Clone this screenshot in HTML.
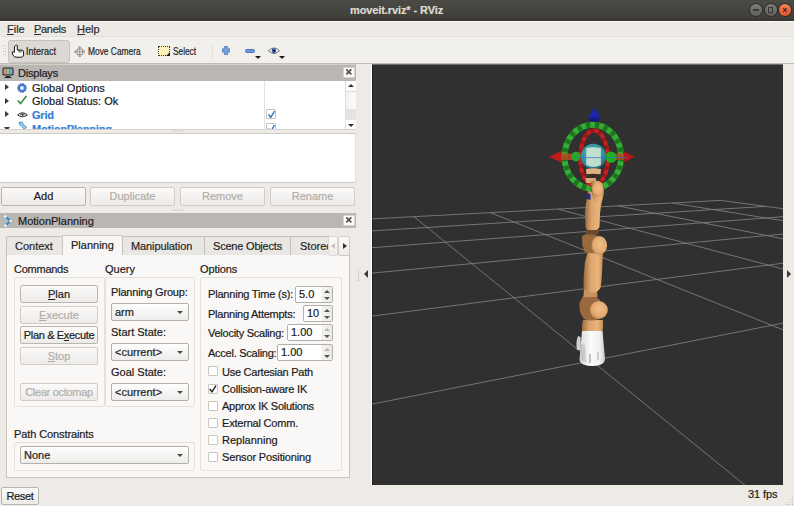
<!DOCTYPE html>
<html><head><meta charset="utf-8">
<style>
*{box-sizing:border-box;margin:0;padding:0}
html,body{width:794px;height:506px;overflow:hidden;background:#eeebe7;font-family:"Liberation Sans",sans-serif;font-size:11px;color:#2a2a2a;-webkit-text-stroke:0.2px currentColor}
.a{position:absolute}
.t{position:absolute;white-space:nowrap;line-height:13px}
#title{left:0;top:0;width:794px;height:21px;background:linear-gradient(#4b4a45,#403f3b 85%,#35342f)}
#title .t{color:#dfdbd2;font-weight:bold;font-size:12px;left:349px;top:3px}
.wb{position:absolute;top:4.1px;width:12px;height:12px;border-radius:50%;background:linear-gradient(#7f7d77,#5f5d58);box-shadow:0 0 0 1px #2e2d2a}
#menu{left:0;top:21px;width:794px;height:15px;background:#edeae5;border-top:1px solid #fcfaf7}
#tool{left:0;top:36px;width:794px;height:28px;background:#f2f0ec;border-top:1px solid #e4e1dc;border-bottom:1px solid #bfbbb5}
.btn{position:absolute;border:1px solid #b9b6b0;border-radius:2px;background:linear-gradient(#fbfaf9,#ecebe9);text-align:center;line-height:16px;color:#202020}
.btn.dis{color:#b0ada8;border-color:#d0cdc8}
.dockh{position:absolute;left:0;width:356px;background:#bab6b2}
.xbtn{position:absolute;width:12px;height:11px;background:#fbfaf8;border:1px solid #d6d3ce;border-radius:1px}
.tri{position:absolute;width:0;height:0;border-top:4px solid transparent;border-bottom:4px solid transparent;border-left:4px solid #3c3c3c}
.trid{position:absolute;width:0;height:0;border-left:4px solid transparent;border-right:4px solid transparent;border-top:4px solid #3c3c3c}
.cb{position:absolute;width:13px;height:13px;border:1px solid #c9c6c1;background:#fff;border-radius:1px}
.combo{position:absolute;border:1px solid #b3b0aa;border-radius:2px;background:linear-gradient(#fdfdfc,#eeedeb);line-height:16px;padding-left:3px;color:#202020}
.combo:after{content:"";position:absolute;right:5px;top:7px;border-left:3px solid transparent;border-right:3px solid transparent;border-top:3.5px solid #4a4a4a}
.spin{position:absolute;border:1px solid #b3b0aa;border-radius:2px;background:#fff;line-height:16px;padding-left:4px;color:#202020}
.grp{position:absolute;border:1px solid #e4e1dc;border-radius:2px}
.tab{position:absolute;top:236px;height:19px;border:1px solid #c4c1bb;border-bottom:none;background:#e9e7e3;line-height:18px;text-align:center;color:#262626;border-radius:2px 2px 0 0}
</style></head><body>
<div id="title" class="a"><div class="t" style="left:350px;top:4px;font-size:11px;letter-spacing:-0.1px">moveit.rviz* - RViz</div>
 <div class="wb" style="left:750px"><div class="a" style="left:2.8px;top:5.4px;width:6.4px;height:1.3px;background:#3a3935"></div></div>
 <div class="wb" style="left:764.5px"><div class="a" style="left:3.2px;top:3.2px;width:5.6px;height:5.4px;border:1.2px solid #3a3935"></div></div>
 <div class="wb" style="left:778.7px;background:linear-gradient(#f8825a,#e0512a)"><svg class="a" style="left:0;top:0" width="12" height="12"><path d="M4.2,4.2 L7.8,7.8 M7.8,4.2 L4.2,7.8" stroke="#3a2418" stroke-width="1.1"/></svg></div>
</div>
<div id="menu" class="a">
 <div class="t" style="left:7px;top:1px"><u>F</u>ile</div>
 <div class="t" style="left:34px;top:1px;letter-spacing:-0.3px"><u>P</u>anels</div>
 <div class="t" style="left:77px;top:1px"><u>H</u>elp</div>
</div>
<div id="tool" class="a">
 <svg class="a" style="left:2px;top:7px" width="6" height="14"><g fill="#cdc9c3"><rect x="1" y="1" width="1" height="1"/><rect x="3" y="1" width="1" height="1"/><rect x="1" y="4" width="1" height="1"/><rect x="3" y="4" width="1" height="1"/><rect x="1" y="7" width="1" height="1"/><rect x="3" y="7" width="1" height="1"/><rect x="1" y="10" width="1" height="1"/><rect x="3" y="10" width="1" height="1"/></g></svg>
 <div class="a" style="left:8px;top:3px;width:62px;height:23px;background:#dcd9d5;border:1px solid #c6c2bc;border-radius:3px"></div>
 <svg class="a" style="left:11px;top:7px" width="14" height="14" viewBox="0 0 14 14"><path d="M4.5,1.5 Q5.5,0.8 6.3,1.5 L6.3,6 L11.2,6.2 Q12.6,6.5 12.6,8 L12.6,11 Q12.3,13 10.5,13.2 L5,13.2 Q3,13 2.2,11.3 L1.2,8.8 Q1,7.8 2,7.6 L3.3,8.5 L3.6,2.2 Z" fill="#fff" stroke="#111" stroke-width="1"/><path d="M8,6.2 L8,8.6 M10,6.3 L10,8.6" stroke="#111" stroke-width="0.8"/></svg>
 <div class="t" style="left:26px;top:8px;font-size:10px;color:#1e1e1e;transform-origin:0 0;transform:scaleX(0.9)">Interact</div>
 <svg class="a" style="left:73.5px;top:8.5px" width="11.5" height="11.5" viewBox="0 0 13 13"><g fill="none" stroke="#777" stroke-width="0.8"><path d="M6.5,0.5 L6.5,12.5 M0.5,6.5 L12.5,6.5"/><path d="M4.5,2.5 L6.5,0.5 L8.5,2.5 M4.5,10.5 L6.5,12.5 L8.5,10.5 M2.5,4.5 L0.5,6.5 L2.5,8.5 M10.5,4.5 L12.5,6.5 L10.5,8.5"/><rect x="3.5" y="3.5" width="6" height="6"/></g></svg>
 <div class="t" style="left:88px;top:8px;font-size:10px;color:#1e1e1e;transform-origin:0 0;transform:scaleX(0.84)">Move Camera</div>
 <div class="a" style="left:158px;top:8.5px;width:12px;height:10px;border:1px dotted #333;background:#fbf2bc"></div>
 <svg class="a" style="left:166px;top:14.5px" width="4" height="4"><path d="M4,0 L4,4 L0,4 Z" fill="#222"/></svg>
 <div class="t" style="left:173px;top:8px;font-size:10px;color:#1e1e1e;transform-origin:0 0;transform:scaleX(0.83)">Select</div>
 <div class="a" style="left:212px;top:8px;width:1px;height:13px;background:#e2dfda"></div>
 <svg class="a" style="left:222px;top:9px" width="8" height="9" viewBox="0 0 8 9"><path d="M2.3,0.5 L5.7,0.5 L5.7,2.8 L7.6,2.8 L7.6,6.1 L5.7,6.1 L5.7,8.5 L2.3,8.5 L2.3,6.1 L0.4,6.1 L0.4,2.8 L2.3,2.8 Z" fill="#78a2dc" stroke="#4a7cc4" stroke-width="0.8"/></svg>
 <div class="a" style="left:244.5px;top:11.5px;width:10px;height:4px;background:#6d9ad8;border:1px solid #4a78bd;border-radius:1.5px"></div>
 <div class="trid" style="left:254.5px;top:19px;border-left-width:3px;border-right-width:3px;border-top-width:3px;border-top-color:#1a1a1a"></div>
 <svg class="a" style="left:267.5px;top:9.5px" width="12" height="7.5" viewBox="0 0 13 8"><path d="M0.5,4 Q6.5,-2 12.5,4 Q6.5,10 0.5,4 Z" fill="#fff" stroke="#555" stroke-width="0.9"/><circle cx="6.5" cy="4" r="2.6" fill="#3b5fb0"/><circle cx="6.5" cy="4" r="1.1" fill="#111"/></svg>
 <div class="trid" style="left:278.5px;top:19px;border-left-width:3px;border-right-width:3px;border-top-width:3px;border-top-color:#1a1a1a"></div>
</div>

<!-- Displays dock -->
<div class="a" style="left:0;top:64px;width:356px;height:1px;background:#d5d1cc"></div>
<div class="dockh" style="top:65px;height:16px">
 <svg class="a" style="left:2px;top:2px" width="12" height="11" viewBox="0 0 12 11"><rect x="0.5" y="0.5" width="11" height="8" rx="1.2" fill="#222"/><rect x="1.5" y="1.5" width="3" height="6" fill="#d98a8a"/><rect x="4.5" y="1.5" width="3" height="6" fill="#8acb8a"/><rect x="7.5" y="1.5" width="3" height="6" fill="#8a9ad9"/><rect x="4" y="9" width="4" height="1" fill="#222"/><rect x="2.5" y="10" width="7" height="1" fill="#222"/></svg>
 <div class="t" style="left:18px;top:2px;color:#1a1a1a;letter-spacing:-0.2px">Displays</div>
 <div class="xbtn" style="left:343px;top:2px;width:12px;height:11px"><svg class="a" style="left:1.5px;top:1px" width="6" height="6" viewBox="0 0 6 6"><path d="M0.8,0.8 L4.8,4.8 M4.8,0.8 L0.8,4.8" stroke="#555" stroke-width="1.8" stroke-linecap="round"/></svg></div>
</div>
<div class="a" style="left:0;top:81px;width:356px;height:49px;background:#fff;overflow:hidden;border-bottom:1px solid #d6d3ce">
 <div class="a" style="left:264px;top:0;width:1px;height:49px;background:#e4e2de"></div>
 <div class="tri" style="left:5px;top:3px;border-top-width:3.5px;border-bottom-width:3.5px"></div>
 <svg class="a" style="left:17px;top:1.5px" width="10" height="10" viewBox="0 0 10 10"><path d="M9.90,5.00 L8.52,6.14 L8.96,7.88 L7.17,7.99 L6.51,9.66 L5.00,8.70 L3.49,9.66 L2.83,7.99 L1.04,7.88 L1.48,6.14 L0.10,5.00 L1.48,3.86 L1.04,2.12 L2.83,2.01 L3.49,0.34 L5.00,1.30 L6.51,0.34 L7.17,2.01 L8.96,2.12 L8.52,3.86 Z" fill="#4478d0" stroke="#3a6cc4" stroke-width="0.6" stroke-linejoin="round"/><circle cx="5" cy="5" r="2.2" fill="#a9c4ee"/><circle cx="5" cy="5" r="1.2" fill="#fff"/></svg>
 <div class="t" style="left:32px;top:1px;color:#1a1a1a">Global Options</div>
 <div class="tri" style="left:5px;top:17px;border-top-width:3.5px;border-bottom-width:3.5px"></div>
 <svg class="a" style="left:17px;top:14px" width="10" height="10" viewBox="0 0 10 10"><path d="M0.8,5.5 L3.5,8.6 L9.4,1" fill="none" stroke="#2b8a2b" stroke-width="1.5"/></svg>
 <div class="t" style="left:32px;top:14px;color:#1a1a1a">Global Status: Ok</div>
 <div class="tri" style="left:5px;top:30px;border-top-width:3.5px;border-bottom-width:3.5px"></div>
 <svg class="a" style="left:17px;top:30px" width="11" height="7" viewBox="0 0 11 7"><path d="M0.6,4 Q5.5,-0.5 10.4,4 Q5.5,7.5 0.6,4 Z" fill="none" stroke="#333" stroke-width="1"/><path d="M3.2,3.8 Q5.5,1.5 7.8,3.8" fill="none" stroke="#333" stroke-width="0.9"/><circle cx="5.5" cy="4" r="1" fill="#333"/></svg>
 <div class="t" style="left:32px;top:28px;color:#2f80d8;font-weight:bold;letter-spacing:-0.2px">Grid</div>
 <div class="trid" style="left:4px;top:46px;border-left-width:3.5px;border-right-width:3.5px"></div>
 <svg class="a" style="left:18px;top:40px" width="10" height="10" viewBox="0 0 10 10"><path d="M1,1.5 L4,1 L5.5,4 L8.5,6 L6.5,8.5 L4.5,6 L2,4 Z" fill="#a9d4f2" stroke="#2f86c8" stroke-width="0.9"/></svg>
 <div class="t" style="left:32px;top:42px;color:#2f80d8;font-weight:bold;letter-spacing:-0.2px">MotionPlanning</div>
 <div class="cb" style="left:266px;top:28px;width:10px;height:10px;border-color:#c6c3be"><svg class="a" style="left:0;top:0" width="9" height="9"><path d="M1.5,4.5 L3.8,7.3 L7.5,1.2" fill="none" stroke="#2b68c0" stroke-width="1.3"/></svg></div>
 <div class="cb" style="left:266px;top:42px;width:10px;height:10px;border-color:#c6c3be"><svg class="a" style="left:0;top:0" width="9" height="9"><path d="M1.5,4.5 L3.8,7.3 L7.5,1.2" fill="none" stroke="#2b68c0" stroke-width="1.3"/></svg></div>
 <div class="a" style="left:345px;top:0;width:11px;height:49px;background:linear-gradient(90deg,#f3f2f0,#fbfbfa);border-left:1px solid #e0ddd8"></div>
 <div class="a" style="left:346px;top:0;width:10px;height:11px;background:#fdfdfc;border-bottom:1px solid #dedbd6"></div>
 <div class="trid" style="left:348px;top:3px;border-left-width:3px;border-right-width:3px;border-top:none;border-bottom:3px solid #333"></div>
 <div class="a" style="left:346px;top:28px;width:10px;height:11px;background:#e6e4e1"></div>
 <div class="a" style="left:346px;top:39px;width:10px;height:10px;background:#fdfdfc;border-top:0px solid #dedbd6"></div>
 <div class="trid" style="left:348px;top:43px;border-left-width:3px;border-right-width:3px;border-top-width:3px;border-top-color:#333"></div>
</div>
<div class="a" style="left:0;top:133px;width:356px;height:50px;background:#fff;border:1px solid #cdcac5;border-left:none;border-right-color:#e2dfda"></div>
<div class="btn" style="left:1px;top:187px;width:85px;height:19px">Add</div>
<div class="btn dis" style="left:90px;top:187px;width:85px;height:19px">Duplicate</div>
<div class="btn dis" style="left:180px;top:187px;width:85px;height:19px">Remove</div>
<div class="btn dis" style="left:270px;top:187px;width:85px;height:19px">Rename</div>

<!-- MotionPlanning dock -->
<svg class="a" style="left:172px;top:130px" width="14" height="2"><g fill="#bdb9b3"><rect x="1" y="0.5" width="1" height="1"/><rect x="3" y="0.5" width="1" height="1"/><rect x="5" y="0.5" width="1" height="1"/><rect x="7" y="0.5" width="1" height="1"/><rect x="9" y="0.5" width="1" height="1"/><rect x="11" y="0.5" width="1" height="1"/></g></svg>
<svg class="a" style="left:172px;top:209px" width="14" height="2"><g fill="#bdb9b3"><rect x="1" y="0.5" width="1" height="1"/><rect x="3" y="0.5" width="1" height="1"/><rect x="5" y="0.5" width="1" height="1"/><rect x="7" y="0.5" width="1" height="1"/><rect x="9" y="0.5" width="1" height="1"/><rect x="11" y="0.5" width="1" height="1"/></g></svg>
<div class="dockh" style="top:213px;height:15px">
 <svg class="a" style="left:4px;top:2px" width="9" height="12" viewBox="0 0 9 12"><path d="M1.5,1.5 L6.5,6 L1.5,10.5" fill="none" stroke="#2f8ad0" stroke-width="2.2" stroke-linejoin="round"/><circle cx="1.5" cy="1.5" r="1.2" fill="#fff"/><circle cx="6.5" cy="6" r="1.2" fill="#fff"/><circle cx="1.5" cy="10.5" r="1.2" fill="#fff"/></svg>
 <div class="t" style="left:18px;top:2px;color:#1a1a1a">MotionPlanning</div>
 <div class="xbtn" style="left:343px;top:2px;width:12px;height:11px"><svg class="a" style="left:1.5px;top:1px" width="6" height="6" viewBox="0 0 6 6"><path d="M0.8,0.8 L4.8,4.8 M4.8,0.8 L0.8,4.8" stroke="#555" stroke-width="1.8" stroke-linecap="round"/></svg></div>
</div>
<div class="a" style="left:6px;top:254px;width:344px;height:224px;background:#faf8f6;border:1px solid #c9c6c0"></div>
<div class="tab" style="left:6px;width:57px"><div class="t" style="left:8px;top:3px">Context</div></div>
<div class="tab" style="left:62px;top:235px;height:20px;width:61px;background:#f9f7f5;border-color:#c9c6c0"><div class="t" style="left:8px;top:3px;color:#1a1a1a">Planning</div></div>
<div class="a" style="left:63px;top:254px;width:59px;height:2px;background:#f9f7f5"></div>
<div class="tab" style="left:122px;width:83px"><div class="t" style="left:8px;top:3px;letter-spacing:-0.1px">Manipulation</div></div>
<div class="tab" style="left:204px;width:87px"><div class="t" style="left:8px;top:3px;letter-spacing:-0.2px">Scene Objects</div></div>
<div class="tab" style="left:290px;width:40px;overflow:hidden;border-right:none"><div class="t" style="left:9px;top:3px">Stored States</div></div>
<div class="btn" style="left:328px;top:236px;width:10px;height:20px;border-radius:2px;border-color:#dcd9d4"><div class="tri" style="left:2px;top:6px;border-left:none;border-right:4px solid #c9c6c1;border-top-width:3.5px;border-bottom-width:3.5px"></div></div>
<div class="btn" style="left:338px;top:236px;width:12px;height:20px;border-radius:2px;border-color:#d0cdc8"><div class="tri" style="left:4px;top:6px;border-top-width:3.5px;border-bottom-width:3.5px;border-left-color:#333"></div></div>

<!-- Planning page content -->
<div class="t" style="left:14px;top:263px;color:#1a1a1a;letter-spacing:-0.25px">Commands</div>
<div class="t" style="left:105px;top:263px;color:#1a1a1a">Query</div>
<div class="t" style="left:200px;top:263px;color:#1a1a1a;letter-spacing:-0.1px">Options</div>
<div class="grp" style="left:14px;top:277px;width:91px;height:130px"></div>
<div class="grp" style="left:105px;top:277px;width:90px;height:130px"></div>
<div class="grp" style="left:200px;top:277px;width:142px;height:194px"></div>
<div class="btn" style="left:20px;top:285px;width:78px;height:18px"><u>P</u>lan</div>
<div class="btn dis" style="left:20px;top:306px;width:78px;height:18px"><u>E</u>xecute</div>
<div class="btn" style="left:20px;top:326px;width:78px;height:18px;letter-spacing:-0.35px">Plan &amp; E<u>x</u>ecute</div>
<div class="btn dis" style="left:20px;top:347px;width:78px;height:18px"><u>S</u>top</div>
<div class="btn dis" style="left:20px;top:383px;width:78px;height:18px;letter-spacing:-0.3px">Clear octomap</div>
<div class="t" style="left:111px;top:286px;color:#1a1a1a;letter-spacing:-0.2px">Planning Group:</div>
<div class="combo" style="left:111px;top:303px;width:78px;height:18px">arm</div>
<div class="t" style="left:111px;top:326px;color:#1a1a1a">Start State:</div>
<div class="combo" style="left:111px;top:343px;width:78px;height:18px">&lt;current&gt;</div>
<div class="t" style="left:111px;top:366px;color:#1a1a1a">Goal State:</div>
<div class="combo" style="left:111px;top:383px;width:78px;height:18px">&lt;current&gt;</div>
<div class="t" style="left:208px;top:288px;color:#1a1a1a;letter-spacing:-0.2px">Planning Time (s):</div>
<div class="spin" style="left:295px;top:286px;width:38px;height:17px"><div class="t" style="left:3px;top:1px">5.0</div><div class="a" style="right:0;top:0;width:10px;height:15px;background:linear-gradient(90deg,#f4f3f1,#ebe9e6);border-left:1px solid #e8e6e2"></div><div class="trid" style="right:2px;top:3px;border-left-width:3px;border-right-width:3px;border-top:none;border-bottom:3px solid #555"></div><div class="trid" style="right:2px;top:10px;border-left-width:3px;border-right-width:3px;border-top-width:3px;border-top-color:#555"></div></div>
<div class="t" style="left:208px;top:308px;color:#1a1a1a;letter-spacing:-0.25px">Planning Attempts:</div>
<div class="spin" style="left:303px;top:305px;width:30px;height:17px"><div class="t" style="left:3px;top:1px">10</div><div class="a" style="right:0;top:0;width:10px;height:15px;background:linear-gradient(90deg,#f4f3f1,#ebe9e6);border-left:1px solid #e8e6e2"></div><div class="trid" style="right:2px;top:3px;border-left-width:3px;border-right-width:3px;border-top:none;border-bottom:3px solid #555"></div><div class="trid" style="right:2px;top:10px;border-left-width:3px;border-right-width:3px;border-top-width:3px;border-top-color:#555"></div></div>
<div class="t" style="left:208px;top:327px;color:#1a1a1a;letter-spacing:-0.25px">Velocity Scaling:</div>
<div class="spin" style="left:287px;top:324px;width:46px;height:17px"><div class="t" style="left:3px;top:1px">1.00</div><div class="a" style="right:0;top:0;width:10px;height:15px;background:linear-gradient(90deg,#f4f3f1,#ebe9e6);border-left:1px solid #e8e6e2"></div><div class="trid" style="right:2px;top:3px;border-left-width:3px;border-right-width:3px;border-top:none;border-bottom:3px solid #b8b5b0"></div><div class="trid" style="right:2px;top:10px;border-left-width:3px;border-right-width:3px;border-top-width:3px;border-top-color:#555"></div></div>
<div class="t" style="left:208px;top:347px;color:#1a1a1a;letter-spacing:-0.25px">Accel. Scaling:</div>
<div class="spin" style="left:277px;top:344px;width:56px;height:17px"><div class="t" style="left:3px;top:1px">1.00</div><div class="a" style="right:0;top:0;width:10px;height:15px;background:linear-gradient(90deg,#f4f3f1,#ebe9e6);border-left:1px solid #e8e6e2"></div><div class="trid" style="right:2px;top:3px;border-left-width:3px;border-right-width:3px;border-top:none;border-bottom:3px solid #b8b5b0"></div><div class="trid" style="right:2px;top:10px;border-left-width:3px;border-right-width:3px;border-top-width:3px;border-top-color:#555"></div></div>
<div class="cb" style="left:208px;top:366px;width:10px;height:10px"></div>
<div class="t" style="left:222px;top:366px;color:#1a1a1a;letter-spacing:-0.25px">Use Cartesian Path</div>
<div class="cb" style="left:208px;top:384px;width:10px;height:10px"><svg class="a" style="left:0;top:0" width="8" height="8"><path d="M0.8,4 L3,6.8 L7,0.6" fill="none" stroke="#111" stroke-width="1.3"/></svg></div>
<div class="t" style="left:222px;top:383px;color:#1a1a1a;letter-spacing:-0.2px">Collision-aware IK</div>
<div class="cb" style="left:208px;top:401px;width:10px;height:10px"></div>
<div class="t" style="left:222px;top:400px;color:#1a1a1a;letter-spacing:-0.25px">Approx IK Solutions</div>
<div class="cb" style="left:208px;top:418px;width:10px;height:10px"></div>
<div class="t" style="left:222px;top:417px;color:#1a1a1a;letter-spacing:-0.2px">External Comm.</div>
<div class="cb" style="left:208px;top:435px;width:10px;height:10px"></div>
<div class="t" style="left:222px;top:434px;color:#1a1a1a">Replanning</div>
<div class="cb" style="left:208px;top:452px;width:10px;height:10px"></div>
<div class="t" style="left:222px;top:451px;color:#1a1a1a;letter-spacing:-0.15px">Sensor Positioning</div>
<div class="t" style="left:14px;top:428px;color:#1a1a1a;letter-spacing:-0.1px">Path Constraints</div>
<div class="grp" style="left:14px;top:442px;width:181px;height:29px"></div>
<div class="combo" style="left:20px;top:446px;width:169px;height:18px">None</div>

<!-- Reset -->
<div class="btn" style="left:1px;top:487px;width:38px;height:18px;line-height:16px;letter-spacing:-0.3px">Reset</div>

<!-- splitter arrows -->
<svg class="a" style="left:357px;top:269px" width="3" height="13"><g fill="#b9b5af"><rect x="1" y="1" width="1" height="1"/><rect x="1" y="3" width="1" height="1"/><rect x="1" y="5" width="1" height="1"/><rect x="1" y="7" width="1" height="1"/><rect x="1" y="9" width="1" height="1"/><rect x="1" y="11" width="1" height="1"/></g></svg>
<div class="tri" style="left:364px;top:270px;border-left:none;border-right:4px solid #3c3c3c;border-top-width:4px;border-bottom-width:4px"></div>
<div class="tri" style="left:787px;top:270px;border-top-width:4px;border-bottom-width:4px"></div>
<div class="a" style="left:371px;top:64px;width:1px;height:421px;background:#fdfcfb"></div>

<!-- 3D view -->
<svg class="a" style="left:372px;top:65px" width="411" height="420" viewBox="0 0 411 420">
<defs>
<linearGradient id="tan" x1="0" x2="1" y1="0" y2="0"><stop offset="0" stop-color="#9c6c40"/><stop offset="0.35" stop-color="#dba46c"/><stop offset="0.75" stop-color="#eab47a"/><stop offset="1" stop-color="#c28a56"/></linearGradient>
<linearGradient id="wht" x1="0" x2="1" y1="0" y2="0"><stop offset="0" stop-color="#d8d8d8"/><stop offset="0.45" stop-color="#fbfbfb"/><stop offset="0.8" stop-color="#f0f0f0"/><stop offset="1" stop-color="#c8c8c8"/></linearGradient>
<radialGradient id="knob" cx="0.55" cy="0.45" r="0.6"><stop offset="0" stop-color="#f2bf88"/><stop offset="0.7" stop-color="#e2aa70"/><stop offset="1" stop-color="#b98350"/></radialGradient>
<radialGradient id="teal" cx="0.45" cy="0.4" r="0.6"><stop offset="0" stop-color="#4fb8c2"/><stop offset="0.8" stop-color="#2f8d98"/><stop offset="1" stop-color="#1f6a72"/></radialGradient>
</defs>
<rect width="411" height="420" fill="#303030"/><rect x="0" y="0" width="1" height="420" fill="#1c1c1c"/>
<g id="grid" stroke="#7d7d7d" stroke-width="0.9" fill="none">
<line x1="0.0" y1="339.1" x2="411.0" y2="258.1"/>
<line x1="372.8" y1="420.0" x2="42.0" y2="151.7"/>
<line x1="0.0" y1="251.1" x2="411.0" y2="198.2"/>
<line x1="411.0" y1="264.8" x2="118.4" y2="147.6"/>
<line x1="0.0" y1="208.1" x2="411.0" y2="169.0"/>
<line x1="411.0" y1="204.0" x2="186.0" y2="144.1"/>
<line x1="0.0" y1="182.7" x2="411.0" y2="151.7"/>
<line x1="411.0" y1="173.8" x2="246.1" y2="140.9"/>
<line x1="0.0" y1="165.9" x2="393.2" y2="141.4"/>
<line x1="411.0" y1="155.7" x2="300.1" y2="138.0"/>
<line x1="0.0" y1="153.9" x2="348.7" y2="135.4"/>
<line x1="411.0" y1="143.7" x2="348.7" y2="135.4"/>
</g>
<g id="robot" transform="translate(-372,-65)">
<!-- base cable -->
<path d="M577,350 Q575.5,342 578,336 L580.5,337 L581,350 Z" fill="#d0d0d0"/>
<!-- white base -->
<path d="M582,330.5 L602.5,330.5 L605,359 Q605,365.5 593,366 Q580.5,366 579.5,360 Z" fill="url(#wht)"/>
<path d="M580,344 L585,345 L586,362 L581,361 Z" fill="#a8a8a8" opacity="0.45"/>
<path d="M589,354 L591,354 L591,363 L589,363 Z" fill="#8a8a8a" opacity="0.5"/>
<path d="M597,352 L599,352 L599,360 L597,360 Z" fill="#9a9a9a" opacity="0.4"/>
<!-- lower tan link -->
<path d="M582,331 Q581.5,325 583,320 L603,320 Q603.5,326 602.5,331 Z" fill="url(#tan)"/>
<!-- joint knob -->
<path d="M583,296 Q588,294 595,296 L600,300 L600,319 Q590,322 584,319 Q578.5,312 579.5,303 Z" fill="#9a6a3e"/>
<circle cx="598.8" cy="310" r="9" fill="url(#knob)"/>
<!-- upper link 2 -->
<path d="M584,289 L597,289 L597.5,297 L583.5,297 Z" fill="#c8925c"/>
<path d="M588,252 L603,252 Q602.5,262 602,272 Q601.5,282 600.5,288 Q598,292.5 591,292.5 Q584.5,292 583.5,287 Q583.5,275 584.8,263 Q586,257 588,252 Z" fill="url(#tan)"/>
<!-- joint 2 -->
<path d="M582,236 Q587,233 593,234 L598,236 L597,253 Q588,254 584,251 Q581.5,244 582,236 Z" fill="#9a6a3e"/>
<ellipse cx="599.3" cy="245.4" rx="7.8" ry="9.4" fill="url(#knob)"/>
<!-- upper link 1 -->
<path d="M589.5,182 Q597,179 602.5,183.5 Q605,190 602.5,199 Q600.5,207 600,214 L599.5,227 Q597.5,231 592,231.5 Q586.5,231 585.5,227 L585,212 Q585.5,203 587.5,196 Q588,188 589.5,182 Z" fill="url(#tan)"/>
<path d="M585.5,230 L599,230 L598.5,234.5 L586,234.5 Z" fill="#6a4a2c"/>
<!-- interactive marker: rings -->
<ellipse cx="592.8" cy="156.7" rx="28.3" ry="32" fill="none" stroke="#36ad36" stroke-width="6"/>
<ellipse cx="592.8" cy="156.7" rx="28.3" ry="32" fill="none" stroke="#1d761d" stroke-width="6" stroke-dasharray="4.5 4.5"/>
<ellipse cx="594" cy="158" rx="13.8" ry="27.5" fill="none" stroke="#c82020" stroke-width="4"/>
<ellipse cx="594" cy="158" rx="13.8" ry="27.5" fill="none" stroke="#8a1414" stroke-width="4" stroke-dasharray="4 4" opacity="0.7"/>
<!-- arrows -->
<path d="M594.3,107.5 L600.5,118 L588,118 Z" fill="#1a24b0"/>
<ellipse cx="594.3" cy="119.5" rx="5" ry="2.2" fill="#151c80"/>
<path d="M549,156.8 L561.8,150.8 L561.8,162.8 Z" fill="#c01a1a"/>
<rect x="561" y="153.5" width="12" height="6.5" fill="#b8461e" opacity="0.85"/>
<path d="M635,156.8 L623,150.8 L623,162.8 Z" fill="#b01616"/>
<rect x="612" y="153.5" width="12" height="6.5" fill="#b8461e" opacity="0.8"/>
<circle cx="576" cy="156.6" r="4.8" fill="#28a828"/>
<circle cx="611" cy="157.2" r="5.6" fill="#1fb01f"/>
<!-- sphere -->
<circle cx="593.5" cy="156.4" r="12.7" fill="url(#teal)"/>
<path d="M586.2,148 Q593.5,146.5 600.9,148 L600.9,165 Q593.5,169 586.2,165 Z" fill="#cde6d6" opacity="0.9"/>
<line x1="575" y1="157.6" x2="628" y2="157.6" stroke="#3a6fd0" stroke-width="0.7"/>
<!-- wrist -->
<path d="M586,169 Q593,167.5 601,169 L600.5,174.5 L586.5,174.5 Z" fill="#e3b181"/>
<path d="M586,174.5 Q593,173 600.5,174.5 L600,178 L586.5,178 Z" fill="#3b2f25"/>
<path d="M585.5,178 L596,178 L595.5,183 L586,183 Z" fill="#d8a878"/>
<path d="M591,181.5 Q597.5,179 602.5,183.5 Q605,190 602.5,199 Q600,203 595,202 Q591,196 591,181.5 Z" fill="url(#tan)"/>
<ellipse cx="597.5" cy="189" rx="5.5" ry="7.5" fill="url(#knob)"/>
<path d="M586.5,193 L590.5,194 L590.5,200 L587,199 Z" fill="#1f2a8a"/>
</g>
</svg>
<div class="a" style="left:372px;top:64px;width:411px;height:1px;background:#6d6b67"></div>
<div class="t" style="left:748px;top:488px;color:#1a1a1a;letter-spacing:-0.1px">31 fps</div>
<svg class="a" style="left:785px;top:496px" width="9" height="10"><g fill="#c4c0ba"><rect x="7" y="1" width="1" height="1"/><rect x="5" y="3" width="1" height="1"/><rect x="7" y="3" width="1" height="1"/><rect x="3" y="5.5" width="1" height="1"/><rect x="5" y="5.5" width="1" height="1"/><rect x="7" y="5.5" width="1" height="1"/><rect x="1" y="8" width="1" height="1"/><rect x="3" y="8" width="1" height="1"/><rect x="5" y="8" width="1" height="1"/><rect x="7" y="8" width="1" height="1"/></g></svg>
</body></html>
